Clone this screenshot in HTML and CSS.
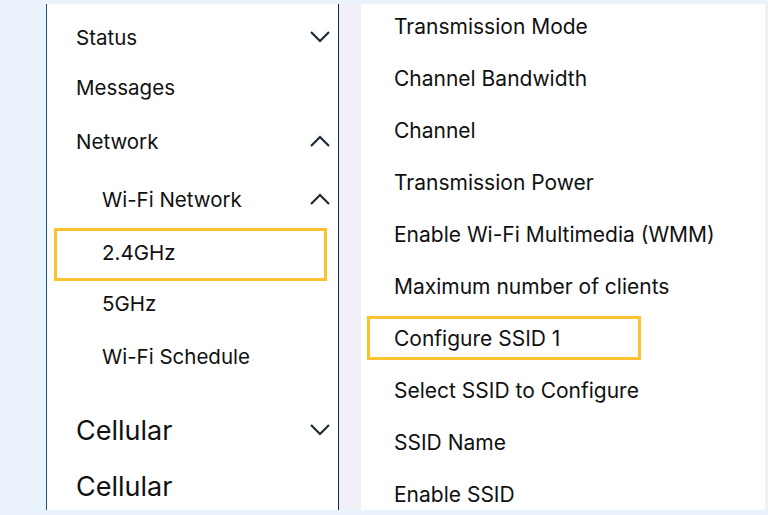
FILE: index.html
```html
<!DOCTYPE html>
<html lang="en">
<head>
    <meta charset="UTF-8">
    <meta name="viewport" content="width=device-width, initial-scale=1.0">
    <title>Wi-Fi Settings</title>
    <link rel="stylesheet" href="styles.css">
</head>
<body>
    <div id="page">
        <div id="sidebar">
            <div class="nav-item row-status">
                <span>Status</span>
                <svg class="chevron" viewBox="0 0 20 12"><path d="M1 1 L10 10 L19 1"/></svg>
            </div>
            <div class="nav-item row-messages">
                <span>Messages</span>
            </div>
            <div class="nav-item row-network">
                <span>Network</span>
                <svg class="chevron" viewBox="0 0 20 12"><path d="M1 11 L10 2 L19 11"/></svg>
            </div>
            <div class="nav-item sub row-wifi">
                <span>Wi-Fi Network</span>
                <svg class="chevron" viewBox="0 0 20 12"><path d="M1 11 L10 2 L19 11"/></svg>
            </div>
            <div class="nav-item sub highlight row-24">
                <span>2.4GHz</span>
            </div>
            <div class="nav-item sub row-5">
                <span>5GHz</span>
            </div>
            <div class="nav-item sub row-schedule">
                <span>Wi-Fi Schedule</span>
            </div>
            <div class="nav-item big row-cellular">
                <span>Cellular</span>
                <svg class="chevron" viewBox="0 0 20 12"><path d="M1 1 L10 10 L19 1"/></svg>
            </div>
            <div class="nav-item big row-cellular2">
                <span>Cellular</span>
            </div>
        </div>

        <div id="gutter"></div>

        <div id="content">
            <div class="setting">Transmission Mode</div>
            <div class="setting">Channel Bandwidth</div>
            <div class="setting">Channel</div>
            <div class="setting">Transmission Power</div>
            <div class="setting">Enable Wi-Fi Multimedia (WMM)</div>
            <div class="setting">Maximum number of clients</div>
            <div class="setting highlight">Configure SSID 1</div>
            <div class="setting">Select SSID to Configure</div>
            <div class="setting">SSID Name</div>
            <div class="setting">Enable SSID</div>
        </div>
    </div>
</body>
</html>
```

FILE: styles.css
```css
body {
    margin: 0;
    background-color: #eaf3fc;
    font-family: Inter, "Noto Sans", sans-serif;
    color: #111;
    height: 515px;
    overflow: hidden;
}
#page {
    display: flex;
    padding: 4px 3px 5px 46px;
    height: 506px;
}
#sidebar {
    width: 293px;
    flex: none;
    background: #fff;
    border-left: 1px solid #1d5387;
    border-right: 1px solid #0b2d5a;
    padding-top: 8px;
    box-sizing: border-box;
    overflow: hidden;
}
#gutter {
    width: 22px;
    flex: none;
    background: #f0f0f6;
}
#content {
    flex: 1;
    background: #fff;
    display: flex;
    flex-direction: column;
    gap: 8px;
    overflow: hidden;
}
.nav-item {
    display: flex;
    align-items: center;
    justify-content: space-between;
    padding: 0 8px 0 29px;
    font-size: 20.5px;
    box-sizing: border-box;
}
.nav-item.sub {
    padding-left: 55px;
}
.nav-item.big {
    font-size: 27px;
}
.chevron {
    width: 20px;
    height: 12px;
    fill: none;
    stroke: #1e2a35;
    stroke-width: 2.2;
}
.row-status { height: 50px; }
.row-messages { height: 50px; }
.row-network { height: 58px; }
.row-wifi { height: 58px; }
.row-24 { height: 53px; }
.row-5 { height: 45px; }
.row-schedule { height: 60px; }
.row-cellular { height: 88px; }
.row-cellular2 { height: 24px; }
.nav-item.highlight {
    margin-left: 7px;
    width: 273px;
    padding-left: 45px;
    padding-bottom: 4px;
    border: 3px solid #fdc22e;
}
.setting {
    height: 44px;
    flex: none;
    display: flex;
    align-items: center;
    padding-left: 33px;
    font-size: 21px;
    box-sizing: border-box;
}
.setting.highlight {
    margin-left: 6px;
    width: 274px;
    padding-left: 24px;
    border: 3px solid #fdc22e;
}
```
